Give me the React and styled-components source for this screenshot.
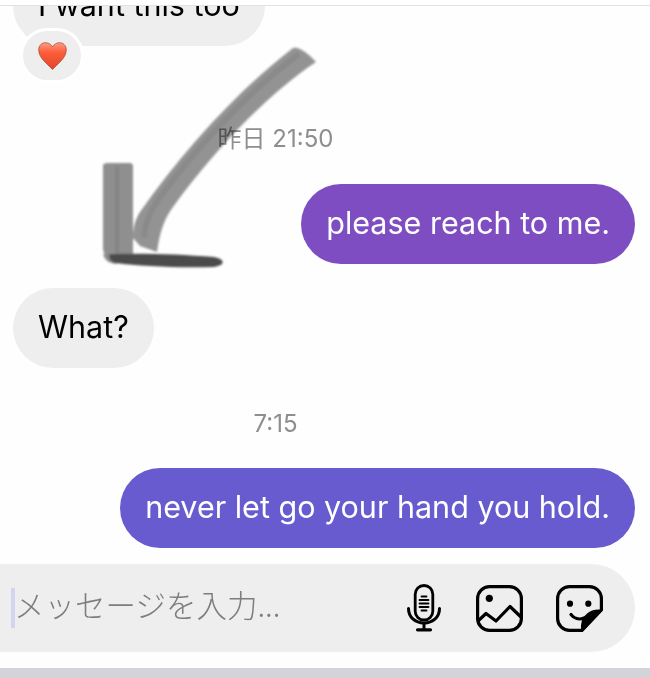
import React from "react";
import styled, { createGlobalStyle } from "styled-components";

const Global = createGlobalStyle`
  html, body { margin: 0; padding: 0; background: #fff; }
  body { font-family: Inter, "Noto Sans CJK JP", sans-serif; }
`;

const Page = styled.div`
  position: relative;
  width: 650px;
  height: 678px;
  overflow: hidden;
  background: #fefefe;
  display: flex;
  flex-direction: column;
`;

const TopRule = styled.div`
  height: 5px;
  flex: none;
  border-bottom: 1px solid #e2e2e2;
  background: #fff;
`;

const Thread = styled.div`
  flex: 1;
  min-height: 0;
  overflow: hidden;
  display: flex;
  flex-direction: column;
  padding: 0 15px 0 13px;
`;

const Row = styled.div`
  display: flex;
  justify-content: ${(p) => (p.$mine ? "flex-end" : "flex-start")};
  margin-top: ${(p) => p.$top || 0}px;
  flex: none;
`;

const Bubble = styled.div`
  position: relative;
  height: 80px;
  box-sizing: border-box;
  padding: 0 25px 3px;
  border-radius: 40px;
  display: flex;
  align-items: center;
  font-size: 30.5px;
  white-space: nowrap;
  background: ${(p) => p.$bg || "#eeeeee"};
  color: ${(p) => (p.$bg ? "#fff" : "#000")};
`;

const Reaction = styled.div`
  position: absolute;
  left: 10px;
  top: 65px;
  width: 58px;
  height: 49px;
  border-radius: 25px;
  box-shadow: 0 0 0 3px #fff;
  background: #eeeeee;
  display: flex;
  align-items: center;
  justify-content: center;
`;

const Stamp = styled.div`
  flex: none;
  width: 525px;
  text-align: center;
  font-size: 24px;
  line-height: 28px;
  color: #8e8e8e;
  margin-top: ${(p) => p.$top}px;
`;

const Composer = styled.div`
  flex: none;
  width: 635px;
  height: 88px;
  box-sizing: border-box;
  margin-bottom: 16px;
  background: #eeeeee;
  border-radius: 0 44px 44px 0;
  display: flex;
  align-items: center;
  padding: 0 32px 0 11px;
`;

const Caret = styled.div`
  flex: none;
  width: 4px;
  height: 40px;
  background: #cfd6ee;
`;

const Placeholder = styled.div`
  flex: 1;
  margin-left: -1px;
  padding-bottom: 8px;
  font-family: "Noto Sans CJK JP", sans-serif;
  font-weight: 300;
  font-size: 30.5px;
  color: #7d7d7d;
  white-space: nowrap;
`;

const Tools = styled.div`
  display: flex;
  align-items: center;
  gap: 33px;
`;

const MicSlot = styled.div`
  display: flex;
  margin-right: 2px;
`;

const HomeBar = styled.div`
  flex: none;
  height: 10px;
  background: #d2d4da;
`;

const ArrowArt = styled.svg`
  position: absolute;
  left: 90px;
  top: 40px;
  pointer-events: none;
  mix-blend-mode: multiply;
`;

const Heart = () => (
  <svg width="29" height="28" viewBox="0 0 29 28">
    <defs>
      <linearGradient id="hg" x1="0" y1="0" x2="0" y2="1">
        <stop offset="0" stopColor="#ff9c84" />
        <stop offset="0.35" stopColor="#fb5f3c" />
        <stop offset="1" stopColor="#e5432a" />
      </linearGradient>
    </defs>
    <path
      d="M14.500 27.500 C9 21.500 .700 16 .700 7.800 C.700 3.500 3.800 .700 7.500 .700 C10.500 .700 13 2.300 14.500 5 C16 2.300 18.500 .700 21.500 .700 C25.200 .700 28.300 3.500 28.300 7.800 C28.300 16 20 21.500 14.500 27.500 Z"
      fill="url(#hg)"
      stroke="#a5402c"
      strokeWidth="0.7"
    />
  </svg>
);

const Mic = () => (
  <svg width="34" height="48" viewBox="0 0 34 48" fill="none" stroke="#000" strokeWidth="2.800" strokeLinecap="round">
    <rect x="8.200" y="1.500" width="17.600" height="34.500" rx="8.800" />
    <path d="M14.500 12.500h5M12.500 16h9M12.500 19.500h9M12.500 23h9M14.500 26.500h5" strokeWidth="1.800" />
    <path d="M1.500 24.500C1.500 33 8 39 17 39S32.500 33 32.500 24.500" strokeWidth="3" />
    <path d="M17 39v6" strokeWidth="3" strokeLinecap="butt" />
    <path d="M10.500 45.800h13" strokeWidth="3.200" />
  </svg>
);

const Picture = () => (
  <svg width="47" height="47" viewBox="0 0 47 47" fill="none" stroke="#000" strokeWidth="3.200">
    <rect x="1.600" y="1.600" width="43.800" height="43.800" rx="12" />
    <circle cx="13.300" cy="13.300" r="3.600" fill="#000" stroke="none" />
    <path d="M2 36L10 28.500L20 36L34 21.500L45.500 32.500" strokeLinejoin="round" />
  </svg>
);

const Sticker = () => (
  <svg width="47" height="47" viewBox="0 0 47 47" fill="none" stroke="#000" strokeWidth="3.200">
    <path
      d="M13.600 1.600H33.400A12 12 0 0 1 45.400 13.600V25L26 45.400H13.600A12 12 0 0 1 1.600 33.400V13.600A12 12 0 0 1 13.600 1.600Z"
      strokeLinejoin="round"
    />
    <path d="M45.500 25.500C41 25 35 26 31 29.500C27 32.500 25 38 26 46Z" fill="#000" stroke="#000" strokeWidth="1.500" strokeLinejoin="round" />
    <circle cx="14" cy="18.700" r="3.100" fill="#000" stroke="none" />
    <circle cx="32.300" cy="18.700" r="3.100" fill="#000" stroke="none" />
    <path d="M15 29.500C18 33.500 23 35 28 33" strokeLinecap="round" />
  </svg>
);

const Arrow = () => (
  <ArrowArt width="240" height="240" viewBox="0 0 240 240" fill="none">
    <defs>
      <filter id="soft" x="-20%" y="-20%" width="140%" height="140%">
        <feGaussianBlur stdDeviation="1.300" />
      </filter>
    </defs>
    <g filter="url(#soft)">
      <path
        d="M203 8C209 6 219 14 226 22C178 54 126 108 83 167C75 178 70 190 67 212L50 206L43 198C43 188 45 180 50 172C92 112 146 52 203 8Z"
        fill="#949494"
      />
      <path d="M209 14C165 46 112 100 70 157C60 171 54 184 54 198" stroke="#8b8b8b" strokeWidth="6" />
      <path d="M13 126C13 123 16 123 20 123H40C42 123 43 124 43 127V216H24C16 216 13 214 13 208Z" fill="#909090" />
      <path d="M27 126V214" stroke="#858585" strokeWidth="4" />
      <path d="M13 214C15 220 18 223 26 224L40 218L20 214Z" fill="#8c8c8c" />
      <path d="M20 214C50 213 90 214 124 217C135 219 136 225 124 227C85 228 50 226 26 223C20 222 18 217 20 214Z" fill="#4c4c4c" />
    </g>
  </ArrowArt>
);

export default function App() {
  return (
    <Page>
      <Global />
      <TopRule />
      <Thread>
        <Row $top={-40}>
          <Bubble>
            I want this too
            <Reaction>
              <Heart />
            </Reaction>
          </Bubble>
        </Row>
        <Stamp $top={79}>昨日 21:50</Stamp>
        <Row $mine $top={31}>
          <Bubble $bg="#7e4dc1">please reach to me.</Bubble>
        </Row>
        <Row $top={24}>
          <Bubble>What?</Bubble>
        </Row>
        <Stamp $top={42}>7:15</Stamp>
        <Row $mine $top={30}>
          <Bubble $bg="#685bcf">never let go your hand you hold.</Bubble>
        </Row>
      </Thread>
      <Composer>
        <Caret />
        <Placeholder>メッセージを入力...</Placeholder>
        <Tools>
          <MicSlot>
            <Mic />
          </MicSlot>
          <Picture />
          <Sticker />
        </Tools>
      </Composer>
      <HomeBar />
      <Arrow />
    </Page>
  );
}
